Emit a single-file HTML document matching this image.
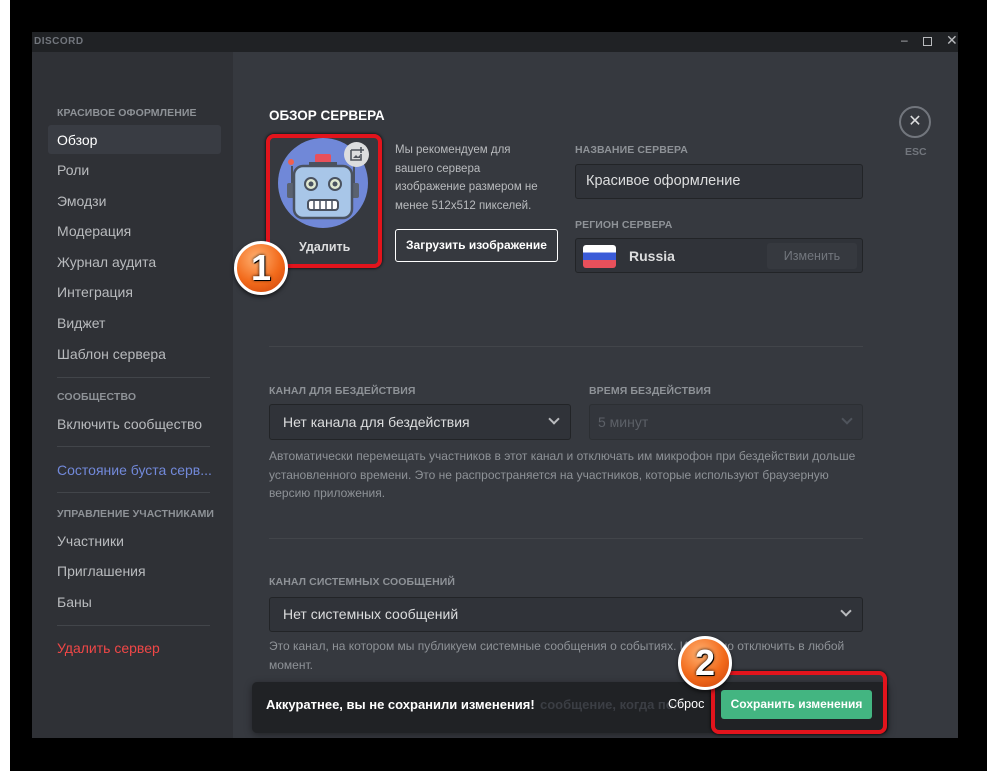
<!DOCTYPE html>
<html><head><meta charset="utf-8"><style>
*{margin:0;padding:0;box-sizing:border-box}
body{width:990px;height:771px;background:#000;position:relative;overflow:hidden;font-family:"Liberation Sans","DejaVu Sans",sans-serif}
.a{position:absolute;white-space:nowrap}
.lbl{font-size:10.5px;font-weight:bold;color:#8e9297;letter-spacing:.1px}
.it{font-size:14px;color:#b9bbbe;left:57px}
.sep{position:absolute;height:1px;background:#42454a}
.box{position:absolute;background:#303339;border:1px solid #222427;border-radius:3px}
.desc{font-size:12px;color:#8e9297;line-height:18.5px}
.chev{position:absolute;width:8px;height:8px;border-right:2px solid #b9bbbe;border-bottom:2px solid #b9bbbe;transform:rotate(45deg)}
.num{position:absolute;width:54px;height:54px;border-radius:50%;background:radial-gradient(circle at 40% 30%,#ffb070,#f26a1b 55%,#c8400a);border:3px solid #fff;box-shadow:0 2px 4px rgba(0,0,0,.6);color:#fff;font-size:36px;font-weight:bold;text-align:center;line-height:48px;text-shadow:0 0 3px #000,1px 1px 0 #000}
.red{position:absolute;border:4px solid #e2141c;border-radius:8px;box-shadow:0 0 3px #000}
</style></head><body>
<div class="a" style="left:0;top:0;width:10px;height:771px;background:#fff"></div>
<div class="a" style="left:987px;top:0;width:3px;height:771px;background:#fff"></div>
<!-- window -->
<div class="a" style="left:32px;top:32px;width:926px;height:20px;background:#202225"></div>
<div class="a" style="left:34px;top:36px;font-size:10px;font-weight:bold;color:#72767d;letter-spacing:.5px">DISCORD</div>
<div class="a" style="left:901px;top:33px;font-size:12px;color:#b9bbbe">–</div>
<div class="a" style="left:923px;top:37px;width:9px;height:9px;border:1.5px solid #b9bbbe"></div>
<div class="a" style="left:946px;top:32px;font-size:14px;color:#b9bbbe">✕</div>
<div class="a" style="left:32px;top:52px;width:201px;height:686px;background:#2f3136"></div>
<div class="a" style="left:233px;top:52px;width:725px;height:686px;background:#36393f"></div>
<!-- sidebar -->
<div class="a lbl" style="left:57px;top:107px">КРАСИВОЕ ОФОРМЛЕНИЕ</div>
<div class="a" style="left:48px;top:125px;width:173px;height:29px;background:#393c43;border-radius:3px"></div>
<div class="a it" style="top:132px;color:#fff">Обзор</div>
<div class="a it" style="top:162px">Роли</div>
<div class="a it" style="top:193px">Эмодзи</div>
<div class="a it" style="top:223px">Модерация</div>
<div class="a it" style="top:254px">Журнал аудита</div>
<div class="a it" style="top:284px">Интеграция</div>
<div class="a it" style="top:315px">Виджет</div>
<div class="a it" style="top:346px">Шаблон сервера</div>
<div class="sep" style="left:57px;top:377px;width:153px"></div>
<div class="a lbl" style="left:57px;top:391px">СООБЩЕСТВО</div>
<div class="a it" style="top:416px">Включить сообщество</div>
<div class="sep" style="left:57px;top:446px;width:153px"></div>
<div class="a it" style="top:462px;color:#7289da">Состояние буста серв...</div>
<div class="sep" style="left:57px;top:492px;width:153px"></div>
<div class="a lbl" style="left:57px;top:508px">УПРАВЛЕНИЕ УЧАСТНИКАМИ</div>
<div class="a it" style="top:533px">Участники</div>
<div class="a it" style="top:563px">Приглашения</div>
<div class="a it" style="top:594px">Баны</div>
<div class="sep" style="left:57px;top:625px;width:153px"></div>
<div class="a it" style="top:640px;color:#f04747">Удалить сервер</div>
<!-- main -->
<div class="a" style="left:269px;top:108px;font-size:13.5px;font-weight:bold;color:#fff">ОБЗОР СЕРВЕРА</div>
<svg class="a" style="left:278px;top:138px" width="92" height="92" viewBox="0 0 92 92">
<circle cx="45" cy="45" r="45" fill="#7088d8"/>
<rect x="37" y="16" width="16" height="9" rx="2" fill="#e8505b"/>
<rect x="31" y="24" width="28" height="4" fill="#4a5260"/>
<line x1="14" y1="28" x2="14" y2="48" stroke="#4a5260" stroke-width="2"/>
<circle cx="13" cy="24" r="3" fill="#f06050"/>
<line x1="76" y1="28" x2="76" y2="48" stroke="#4a5260" stroke-width="2"/>
<rect x="9" y="45" width="8" height="15" rx="2" fill="#5a6270"/>
<rect x="73" y="45" width="8" height="15" rx="2" fill="#5a6270"/>
<rect x="16" y="28" width="58" height="52" rx="9" fill="#a8c6e8" stroke="#4a5260" stroke-width="2.5"/>
<circle cx="33" cy="46" r="6" fill="#e0e8d0" stroke="#4a5260" stroke-width="2"/><circle cx="33" cy="46" r="2.5" fill="#4a5260"/>
<circle cx="57" cy="46" r="6" fill="#e0e8d0" stroke="#4a5260" stroke-width="2"/><circle cx="57" cy="46" r="2.5" fill="#4a5260"/>
<rect x="30" y="62" width="30" height="10" rx="3" fill="#fff" stroke="#4a5260" stroke-width="2"/>
<path d="M36 62v10M42 62v10M48 62v10M54 62v10" stroke="#4a5260" stroke-width="1.5"/>
</svg>
<div class="a" style="left:344px;top:142px;width:25px;height:25px;border-radius:50%;background:#dcddde"></div>
<svg class="a" style="left:349px;top:146px" width="16" height="16" viewBox="0 0 16 16"><path d="M2 4h7M2 4v10h10V8" stroke="#4f545c" stroke-width="1.6" fill="none"/><path d="M12 1v6M9 4h6" stroke="#4f545c" stroke-width="1.6"/><path d="M4 12l3-3 2 2 2-2v3z" fill="#4f545c"/></svg>
<div class="a" style="left:299px;top:240px;font-size:12.5px;font-weight:bold;color:#dcddde">Удалить</div>
<div class="a desc" style="left:395px;top:141px;font-size:11.5px;line-height:18.5px;color:#b9bbbe;white-space:normal;width:155px">Мы рекомендуем для вашего сервера изображение размером не менее 512x512 пикселей.</div>
<div class="a" style="left:395px;top:229px;width:163px;height:33px;border:1px solid #fff;border-radius:3px;color:#fff;font-size:12px;font-weight:bold;text-align:center;line-height:31px">Загрузить изображение</div>
<div class="a lbl" style="left:575px;top:144px">НАЗВАНИЕ СЕРВЕРА</div>
<div class="box" style="left:575px;top:164px;width:288px;height:35px"></div>
<div class="a" style="left:586px;top:173px;font-size:14.5px;color:#dcddde">Красивое оформление</div>
<div class="a lbl" style="left:575px;top:219px">РЕГИОН СЕРВЕРА</div>
<div class="box" style="left:575px;top:238px;width:288px;height:35px"></div>
<div class="a" style="left:583px;top:245px;width:33px;height:23px;border-radius:3px;overflow:hidden;background:linear-gradient(#fff 33%,#3a5bd8 33%,#3a5bd8 66%,#e8505b 66%)"></div>
<div class="a" style="left:629px;top:248px;font-size:14px;font-weight:bold;color:#dcddde">Russia</div>
<div class="a" style="left:767px;top:243px;width:90px;height:26px;background:#36393f;border-radius:3px;color:#72767d;font-size:12.5px;text-align:center;line-height:26px">Изменить</div>
<div class="a" style="left:899px;top:106px;width:32px;height:32px;border:2px solid #72767d;border-radius:50%;color:#dcddde;text-align:center;font-size:16px;line-height:28px">✕</div>
<div class="a" style="left:905px;top:146px;font-size:10.5px;font-weight:bold;color:#72767d">ESC</div>
<div class="sep" style="left:269px;top:346px;width:594px"></div>
<div class="a lbl" style="left:269px;top:385px">КАНАЛ ДЛЯ БЕЗДЕЙСТВИЯ</div>
<div class="a lbl" style="left:589px;top:385px">ВРЕМЯ БЕЗДЕЙСТВИЯ</div>
<div class="box" style="left:269px;top:404px;width:302px;height:36px"></div>
<div class="a" style="left:283px;top:414px;font-size:14px;color:#dcddde">Нет канала для бездействия</div>
<div class="chev" style="left:550px;top:415px"></div>
<div class="box" style="left:589px;top:404px;width:274px;height:36px;background:#33363c;border-color:#2c2f33"></div>
<div class="a" style="left:598px;top:414px;font-size:14px;color:#5c6067">5 минут</div>
<div class="chev" style="left:843px;top:415px;border-color:#4f545c"></div>
<div class="a desc" style="left:269px;top:447px">Автоматически перемещать участников в этот канал и отключать им микрофон при бездействии дольше<br>установленного времени. Это не распространяется на участников, которые используют браузерную<br>версию приложения.</div>
<div class="sep" style="left:269px;top:538px;width:594px"></div>
<div class="a lbl" style="left:269px;top:576px">КАНАЛ СИСТЕМНЫХ СООБЩЕНИЙ</div>
<div class="box" style="left:269px;top:597px;width:594px;height:35px"></div>
<div class="a" style="left:283px;top:606px;font-size:14px;color:#dcddde">Нет системных сообщений</div>
<div class="chev" style="left:842px;top:607px"></div>
<div class="a desc" style="left:269px;top:637px">Это канал, на котором мы публикуем системные сообщения о событиях. Их можно отключить в любой<br>момент.</div>
<div class="a" style="left:269px;top:716px;font-size:13px;font-weight:bold;color:#b9bbbe">к этому серверу.</div>
<!-- save bar -->
<div class="a" style="left:252px;top:682px;width:636px;height:51px;background:#202225;border-radius:5px;box-shadow:0 2px 8px rgba(0,0,0,.4)"></div>
<div class="a" style="left:266px;top:697px;font-size:13px;font-weight:bold;color:#fff">Аккуратнее, вы не сохранили изменения!</div>
<div class="a" style="left:540px;top:697px;font-size:13px;font-weight:bold;color:#3b3e44">сообщение, когда пол</div>
<div class="a" style="left:668px;top:697px;font-size:12.5px;color:#fff">Сброс</div>
<div class="a" style="left:721px;top:690px;width:151px;height:29px;background:#43b581;border-radius:3px;color:#fff;font-size:12px;font-weight:bold;text-align:center;line-height:29px">Сохранить изменения</div>
<!-- annotations -->
<div class="red" style="left:266px;top:134px;width:116px;height:134px"></div>
<div class="red" style="left:711px;top:671px;width:176px;height:63px"></div>
<div class="num" style="left:234px;top:241px">1</div>
<div class="num" style="left:678px;top:636px">2</div>
</body></html>
